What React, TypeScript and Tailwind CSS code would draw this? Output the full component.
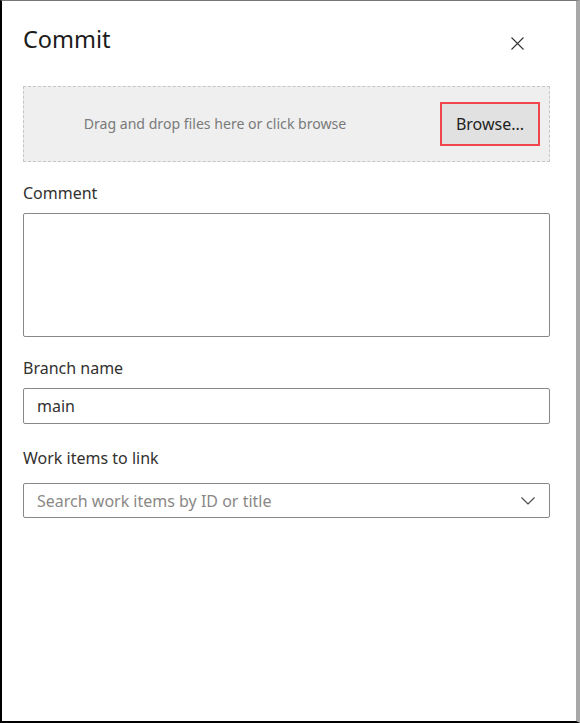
const font = { fontFamily: '"Segoe UI", "Noto Sans", "Open Sans", sans-serif' };

function Label({ children }: { children: React.ReactNode }) {
  return <p className="text-[16px] leading-5 text-[#323130]">{children}</p>;
}

export default function App() {
  return (
    <div className="h-[723px] w-[580px] bg-[#a0a0a0]" style={font}>
      <div className="flex h-full flex-col border-b-2 border-l-2 border-t border-r-4 border-b-black border-l-black border-t-[#777] border-r-[#a8a8a8] bg-white">
        <div className="flex items-start justify-between pl-[21px] pr-[52px] pt-[24px]">
          <h1 className="text-[23.5px] leading-7 font-normal text-[#1b1b1b]">Commit</h1>
          <svg className="mt-[12px]" width="13" height="13" viewBox="0 0 13 13" fill="none" stroke="#333" strokeWidth="1.1">
            <path d="M0.5 0.5 L12.5 12.5 M12.5 0.5 L0.5 12.5" />
          </svg>
        </div>

        <div className="ml-[21px] mr-[26px] mt-[33px] flex h-[76px] items-center border border-dashed border-[#c6c6c6] bg-[#efefef]">
          <p className="flex-1 pr-[34px] text-center text-[14.1px] text-[#7a7a7a]">
            Drag and drop files here or click browse
          </p>
          <div className="mr-[9px] border-2 border-[#f0454a]">
            <button className="h-[40px] w-[96px] bg-[#e1e1e1] text-[16px] text-[#222]">Browse...</button>
          </div>
        </div>

        <div className="ml-[21px] mr-[26px] mt-[21px] flex flex-col">
          <Label>Comment</Label>
          <textarea className="mt-[10px] h-[124px] resize-none rounded-[2px] border border-[#8a8886] bg-white" />

          <div className="mt-[21px]">
            <Label>Branch name</Label>
          </div>
          <div className="mt-[10px] flex h-[36px] items-center rounded-[2px] border border-[#8a8886] px-[13px] text-[16px] text-[#323130]">
            main
          </div>

          <div className="mt-[24px]">
            <Label>Work items to link</Label>
          </div>
          <div className="mt-[15px] flex h-[35px] items-center justify-between rounded-[2px] border border-[#8a8886] pl-[13px] pr-[14px]">
            <span className="text-[16px] text-[#8a8886]">Search work items by ID or title</span>
            <svg width="14" height="8" viewBox="0 0 14 8" fill="none" stroke="#444" strokeWidth="1.1">
              <path d="M0.5 0.5 L7 7 L13.5 0.5" />
            </svg>
          </div>
        </div>
      </div>
    </div>
  );
}
